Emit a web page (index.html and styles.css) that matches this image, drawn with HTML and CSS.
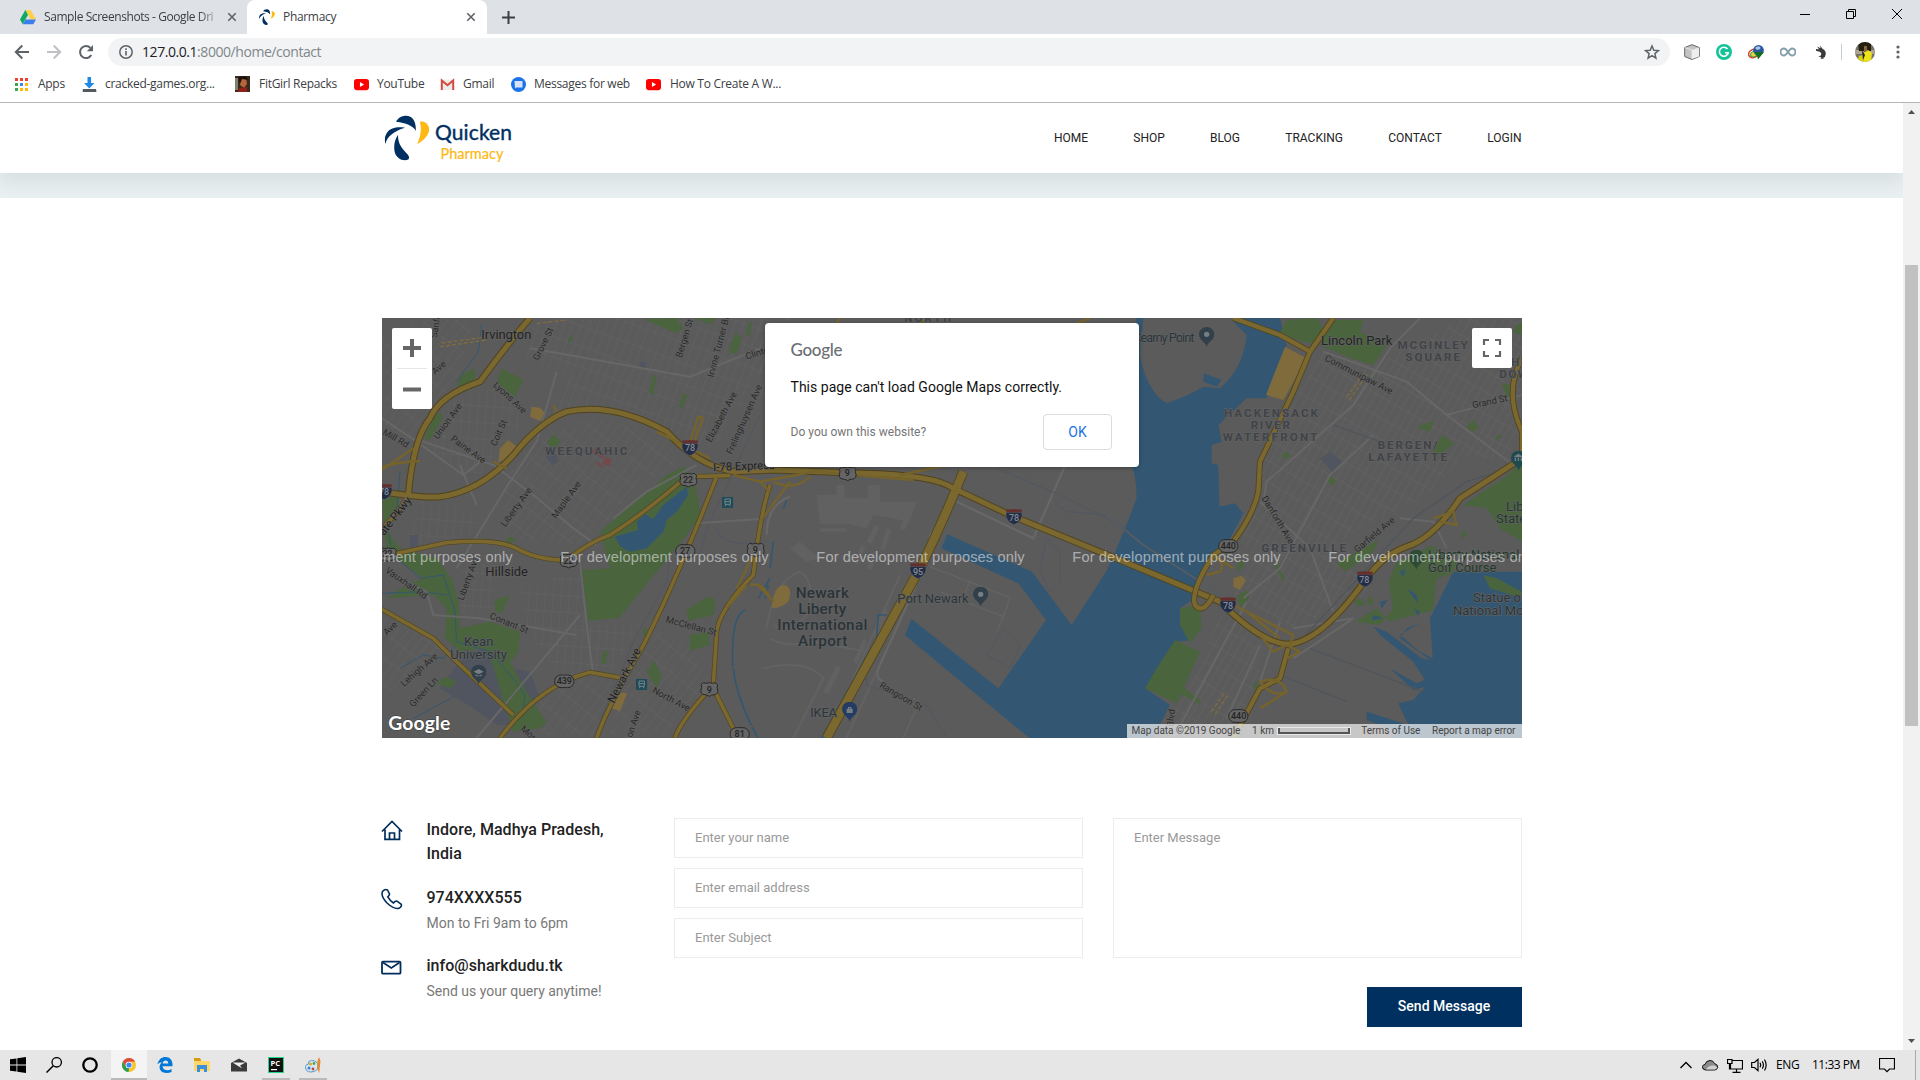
FILE: index.html
```html
<!DOCTYPE html>
<html lang="en">
<head>
<meta charset="utf-8">
<title>Pharmacy</title>
<link rel="stylesheet" href="styles.css">
</head>
<body>
<svg class="defs" width="0" height="0">
  <defs>
    <symbol id="petals" viewBox="0 0 136 138">
      <path fill="#002f62" d="M35 20C43 4 63-2 78 5C91 12 95 28 95 47C84 31 66 24 35 20Z"/>
      <path fill="#002f62" d="M62 38C40 34 18 38 8 52C0 64-1 78 3 86C7 66 28 48 62 38Z"/>
      <path fill="#002f62" d="M41 59C30 75 27 94 31 112C36 130 55 141 72 134C78 126 71 119 63 111C48 96 40 80 41 59Z"/>
      <path fill="#fdb813" d="M107 20C119 17 132 25 135 40C136 58 119 77 99 87C109 64 113 44 107 20Z"/>
    </symbol>
    <symbol id="x" viewBox="0 0 10 10"><path d="M1.3 1.3l7.4 7.4M8.7 1.3L1.3 8.7" stroke="#5f6368" stroke-width="1.6"/></symbol>
    <symbol id="yt" viewBox="0 0 16 16"><rect y="2" width="16" height="12" rx="3" fill="#f00"/><path d="M6.3 5.3v5.4L10.8 8z" fill="#fff"/></symbol>
    <symbol id="interstate" viewBox="0 0 52 50"><path d="M3 12H49C54 28 42 44 26 49C10 44-2 28 3 12Z" fill="#232d44" stroke="#6a6f7a" stroke-width="1.5"/><path d="M3 2Q9 5 14 2Q20 5 26 1Q32 5 38 2Q43 5 49 2V12H3Z" fill="#652f2d"/></symbol>
    <symbol id="usroute" viewBox="0 0 56 46"><path d="M10 3Q19 7 28 3Q37 7 46 3L53 10Q49 17 53 25Q55 36 44 39Q34 39 28 44Q22 39 12 39Q1 36 3 25Q7 17 3 10Z" fill="#656565" stroke="#292929" stroke-width="3"/></symbol>
    <symbol id="stateroute" viewBox="0 0 62 42"><rect x="2" y="2" width="58" height="38" rx="19" fill="#656565" stroke="#292929" stroke-width="3"/></symbol>
    <symbol id="pin" viewBox="0 0 46 60"><path d="M23 60C21 46 0 40 0 22A23 22 0 0 1 46 22C46 40 25 46 23 60Z"/></symbol>
    <symbol id="train" viewBox="0 0 34 34"><rect width="34" height="34" rx="4" fill="#1f4a58"/><path d="M9 7H25V23H9ZM9 29l4-5M25 29l-4-5" fill="none" stroke="#75868b" stroke-width="3"/><path d="M9 15H25" stroke="#75868b" stroke-width="3"/></symbol>
    <pattern id="blocksA" width="58" height="24" patternUnits="userSpaceOnUse" patternTransform="rotate(-70)"><path d="M0 0H58M0 0V24" stroke="#686868" stroke-width="2" fill="none"/></pattern>
    <pattern id="blocksB" width="62" height="24" patternUnits="userSpaceOnUse" patternTransform="rotate(-52)"><path d="M0 0H62M0 0V24" stroke="#686868" stroke-width="2" fill="none"/></pattern>
    <pattern id="blocksC" width="24" height="50" patternUnits="userSpaceOnUse" patternTransform="rotate(4)"><path d="M0 0H24M0 0V50" stroke="#676767" stroke-width="2" fill="none"/></pattern>
    <pattern id="blocksD" width="56" height="22" patternUnits="userSpaceOnUse" patternTransform="rotate(-60)"><path d="M0 0H56M0 0V22" stroke="#696969" stroke-width="2" fill="none"/></pattern>
  </defs>
</svg>

<div class="tabstrip">
  <div class="tab tab-idle">
    <svg width="16" height="15" viewBox="0 0 16 15"><path d="M5.3 0h5.4L16 9.4h-5.4z" fill="#ffcf48"/><path d="M5.3 0L8 4.8 2.7 14.3 0 9.4z" fill="#11a861"/><path d="M5.5 9.4H16l-2.700 4.900H2.700z" fill="#3b7ded"/></svg>
    <span class="tab-title faded">Sample Screenshots - Google Dri</span>
    <svg width="10" height="10"><use href="#x"/></svg>
  </div>
  <div class="tab tab-active">
    <svg width="16" height="18"><use href="#petals"/></svg>
    <span class="tab-title">Pharmacy</span>
    <svg width="10" height="10"><use href="#x"/></svg>
  </div>
  <svg class="newtab" width="13" height="13" viewBox="0 0 13 13"><path d="M6.500 0v13M0 6.500h13" stroke="#3c4043" stroke-width="2"/></svg>
  <div class="winctl">
    <svg width="10" height="10" viewBox="0 0 10 10"><path d="M0 5.500h10" stroke="#000"/></svg>
    <svg width="10" height="10" viewBox="0 0 10 10"><path d="M.5 2.500h7v7h-7zM2.500 2.500v-2h7v7h-2" fill="none" stroke="#000"/></svg>
    <svg width="10" height="10" viewBox="0 0 10 10"><path d="M0 0l10 10M10 0L0 10" stroke="#000"/></svg>
  </div>
</div>

<div class="toolbar">
  <svg width="16" height="16" viewBox="0 0 16 16"><path d="M15 8H2M8.300 1.500L1.800 8l6.500 6.500" fill="none" stroke="#5f6368" stroke-width="2"/></svg>
  <svg width="16" height="16" viewBox="0 0 16 16"><path d="M1 8h13M7.700 1.500L14.200 8l-6.500 6.500" fill="none" stroke="#bfc1c4" stroke-width="2"/></svg>
  <svg width="16" height="16" viewBox="0 0 16 16"><path d="M13.300 11A6 6 0 1 1 12.400 3.900" fill="none" stroke="#5f6368" stroke-width="2"/><path d="M15 1v6.200H8.800z" fill="#5f6368"/></svg>
  <div class="omnibox">
    <svg width="14" height="14" viewBox="0 0 14 14"><circle cx="7" cy="7" r="6.200" fill="none" stroke="#5f6368" stroke-width="1.500"/><path d="M7 6v4.500M7 3.300v1.600" stroke="#5f6368" stroke-width="1.600"/></svg>
    <span class="url"><b>127.0.0.1</b>:8000/home/contact</span>
    <svg width="16" height="16" viewBox="0 0 16 16"><path d="M8 2l1.800 4.200 4.600.4-3.500 3 1 4.500L8 11.700l-3.900 2.400 1-4.500-3.500-3 4.600-.4z" fill="none" stroke="#5f6368" stroke-width="1.500"/></svg>
  </div>
  <div class="exts">
    <svg width="16" height="16" viewBox="0 0 16 16"><path d="M8 .7L15.300 3.500V12.500L8 15.500.7 12.500V3.500z" fill="#c4c4c4" stroke="#666"/><path d="M8 6l7-2.500v9L8 15z" fill="#eee"/><path d="M1 3.600L8 6v9" fill="none" stroke="#eee" stroke-width=".8"/></svg>
    <svg width="16" height="16" viewBox="0 0 16 16"><circle cx="8" cy="8" r="8" fill="#15c39a"/><path d="M11.500 5A4.500 4.500 0 1 0 12.300 8.700H9" fill="none" stroke="#fff" stroke-width="1.600"/></svg>
    <svg width="16" height="16" viewBox="0 0 16 16"><ellipse cx="5.500" cy="9.500" rx="5" ry="4" fill="none" stroke="#d93a2b" stroke-width="1.500" transform="rotate(-25 5.500 9.500)"/><ellipse cx="6" cy="10" rx="3.500" ry="2.600" fill="#e5d43a" stroke="#2fa33f" transform="rotate(-25 6 10)"/><circle cx="10.500" cy="6.200" r="5.300" fill="#2a57a0"/><path d="M7 4q3-3 5-1t-3 3z" fill="#a9c8ea"/><path d="M6.500 8h9.500L10 15.600l-1-4z" fill="#126e20"/></svg>
    <svg width="16" height="16" viewBox="0 0 16 16"><path d="M8 8C6.500 5.500 5.500 4.500 4 4.500a3.500 3.500 0 0 0 0 7C7 11.500 9 4.500 12 4.500a3.500 3.500 0 0 1 0 7C10.500 11.500 9.500 10.500 8 8z" fill="none" stroke="#84a0ab" stroke-width="1.900"/></svg>
    <svg width="16" height="16" viewBox="0 0 16 16"><path d="M4 5l3 .2L5 2.500l3.500 1.800L8 1.500l2.500 3.300q3.500 2 3.300 5.200T11 14l1.200.8H8.500l.8-1.800H6.500l2.500-1.800q1-1.700-.8-3.200L4 6.800z" fill="#3b3b3b"/></svg>
  </div>
  <svg class="avatar" width="20" height="20" viewBox="0 0 20 20"><clipPath id="av"><circle cx="10" cy="10" r="10"/></clipPath><g clip-path="url(#av)"><path fill="#74736a" d="M0 0h20v20H0z"/><path fill="#b0a58c" d="M0 8h20v4H0z"/><path fill="#23200f" d="M3 0h13v9H4z"/><path fill="#8a643b" d="M9 4h3v6H9z"/><path fill="#ece318" d="M8 20l1-9 4-3 4 3-1 9z"/><path fill="#d6cf16" d="M2 20l2-6 4-1 1 7z"/><path fill="#23200f" d="M7 8l3 5-2 5z"/></g></svg>
  <svg width="4" height="14" viewBox="0 0 4 14"><g fill="#5f6368"><circle cx="2" cy="2" r="1.600"/><circle cx="2" cy="7" r="1.600"/><circle cx="2" cy="12" r="1.600"/></g></svg>
</div>

<div class="bookmarks">
  <div class="bm"><svg width="15" height="15" viewBox="0 0 15 15"><path fill="#ea4335" d="M0 1h3v3H0zM5 1h3v3H5zM10 1h3v3h-3z"/><path fill="#34a853" d="M0 6h3v3H0zM0 11h3v3H0z"/><path fill="#4285f4" d="M5 6h3v3H5z"/><path fill="#fbbc05" d="M10 6h3v3h-3zM5 11h3v3H5zM10 11h3v3h-3z"/></svg><span>Apps</span></div>
  <div class="bm"><svg width="15" height="15" viewBox="0 0 15 15"><path fill="#1e88e5" d="M5.500 0h3.500v6h3.500L7.300 11.500 2 6h3.500z"/><path fill="#505a60" d="M1 12h13l.5 3H.5z"/></svg><span>cracked-games.org...</span></div>
  <div class="bm wide"><svg width="15" height="16" viewBox="0 0 15 16"><path fill="#3a2a1e" d="M0 0h15v16H0z"/><path fill="#b5653a" d="M5 2h6l1 6-3 4-4-3z"/><path fill="#8d2118" d="M4 12l8-1v5H3z"/><path fill="#7c8470" d="M0 2h3v12H0z"/><path fill="#1e110b" d="M3 1l8-1 2 4-6-1-2 5z"/></svg><span>FitGirl Repacks</span></div>
  <div class="bm"><svg width="15" height="15"><use href="#yt"/></svg><span>YouTube</span></div>
  <div class="bm"><svg width="15" height="15" viewBox="0 0 15 15"><path fill="#ececec" d="M1 2.500h13v10.500H1z"/><path d="M1.800 13V3.500L7.500 8.300l5.700-4.800V13" fill="none" stroke="#d54b3d" stroke-width="2"/></svg><span>Gmail</span></div>
  <div class="bm"><svg width="15" height="15" viewBox="0 0 15 15"><circle cx="7.500" cy="7.500" r="7.500" fill="#1a73e8"/><path fill="#d5e4fb" d="M3.500 4h8v6.500H5l-1 1z"/></svg><span>Messages for web</span></div>
  <div class="bm wide"><svg width="15" height="15"><use href="#yt"/></svg><span>How To Create A W...</span></div>
</div>

<div class="viewport">
  <div class="page">
    <header class="site-header">
      <svg class="logo" width="134" height="54" viewBox="0 0 134 54">
        <svg x="2.500" y="4" width="45" height="46"><use href="#petals"/></svg>
        <text x="53" y="28.500" class="logo-a" textLength="77">Quicken</text>
        <text x="58.500" y="47.500" class="logo-b" textLength="63">Pharmacy</text>
      </svg>
      <nav><a>HOME</a><a>SHOP</a><a>BLOG</a><a>TRACKING</a><a>CONTACT</a><a>LOGIN</a></nav>
    </header>
    <div class="band"></div>
    <main>
      <div class="map">
        <svg class="map-art" width="1140" height="420" viewBox="6 9 3420 1260">
          <path fill="#5b5b5b" d="M0 0h3440v1280H0z"/>
          <!-- street grids -->
          <path fill="url(#blocksA)" d="M470 0H1150V160L1000 400L880 350L640 280L520 300L560 180L420 130Z"/>
          <path fill="url(#blocksB)" d="M440 400L640 300L860 370L900 450L780 520L700 610L600 690L370 670L380 480ZM6 60L150 10L280 20L230 200L100 370L6 330ZM6 900L190 1000L30 1130L6 1130Z"/>
          <path fill="url(#blocksC)" d="M120 560L300 590L280 660L80 690ZM420 800L600 780L620 930L780 930L700 1060L540 1080L430 940ZM220 260L400 200L420 340L300 480L150 420ZM240 760L350 740L340 880L240 900Z"/>
          <path fill="url(#blocksB)" d="M840 950L970 1000L960 1130L860 1260L680 1260L760 1060ZM420 1160L640 1080L700 1100L650 1260L480 1260Z"/>
          <path fill="url(#blocksA)" d="M1140 9H1230V50L1140 300Z"/>
          <!-- airport aprons -->
          <g fill="#616161"><path d="M1310 540h60v-30h24v40h70v-40h36v50h110l-20 60-110-20-20 40-60-14h-80zM1320 640h80v10h-80zM1460 680l24-50 14 6-24 50zM1420 740l24-50 14 8-24 50zM1500 700l20-60 14 6-20 60zM1460 760l20-50 14 6-20 50zM1560 640l20-50 14 6-20 50zM1360 850l20-40 16 8-20 40zM1420 1040l30-70 12 8-30 70zM1480 960l30-80 14 8-30 80zM1330 1130l40-80 14 8-40 80zM1260 680l60 50-40 10-50-40z"/></g>
          <path fill="none" stroke="#626262" stroke-width="6" d="M1170 970Q1220 1000 1300 980L1460 1010M1150 1060Q1280 1030 1330 1090L1240 1269M1400 1269L1640 740M1370 1200L1560 780M1160 940Q1180 800 1260 770Q1310 800 1280 900Q1230 960 1180 930"/>
          <path fill="none" stroke="#676767" stroke-width="7" d="M1160 660Q1160 570 1230 545M1720 560L1650 660L1640 740L1500 1050Q1480 1090 1510 1100M1730 560L1960 670L2060 440"/>
          <path fill="none" stroke="#646464" stroke-width="4" d="M1600 1150Q1620 1170 1600 1200L1570 1269M1650 755L1890 848L1870 905L1680 830M1770 795L1750 850M1870 905L1850 950"/>
          <path fill="none" stroke="#515661" stroke-width="3" d="M1850 460L2040 540L2240 640M2030 570L2060 590L2180 600M1460 1090V1110L1640 1170L1700 1269M2000 670L2040 710V800L2010 830L1980 770ZM1870 940L1920 990L1890 1060L1820 1020ZM900 500L860 800L760 980L640 1269M960 720L980 640L1060 470L1140 300M1010 640Q1030 700 1130 680"/>
          <!-- east land grids -->
          <path fill="url(#blocksD)" d="M2830 110L3000 140L3250 9H3426V320L3380 440L3260 420L3130 550L2970 620L2850 700L2980 830L2740 940L2560 850L2600 750L2590 660L2640 560L2640 430L2740 250ZM2520 900L2640 960L2640 1100L2550 1269H2330L2440 1090Z"/>
          <!-- water -->
          <g fill="#335772">
            <path d="M2269 9H2290L2280 120Q2300 230 2360 265Q2430 240 2470 215L2520 220Q2590 160 2600 60L2560 20L2570 9H2700L2720 90L2660 250L2600 250L2515 330L2525 380L2495 390L2495 445L2515 450L2518 575L2565 565L2590 595L2540 690L2450 790L2445 850L2400 880L2405 930L2440 975L2390 980L2340 1070L2296 1120L2370 1170L2320 1269H1948L1574 960L1595 912L1855 1120L1998 915L1915 805L1684 700L1702 658L1956 770L2075 930L2181 765L2210 700L2235 640L2270 550Q2270 480 2250 440V120Z"/>
            <path d="M3426 770L3220 770L3180 850L3150 910L3158 1030L3120 1010L3060 960L3100 935L3120 925L3080 940L3060 970L3150 1035L3125 1030L3020 950L2980 935L3000 960L3100 1040L3135 1095L3110 1105L3030 1060L3100 1125L3136 1115L3100 1155L3055 1165L3085 1230L2960 1190L2960 1215L3040 1245V1269H3426Z"/>
            <path d="M2472 175L2525 195L2510 215L2470 200Z"/>
          </g>
          <path fill="none" stroke="#335772" stroke-width="5" d="M1095 885Q1060 900 1058 1000Q1050 1120 1134 1269M1490 900H1520M1495 900L1490 970L1325 1269M1180 680L1170 760M1165 810L1155 850M1220 555L1210 580M1170 790L1135 850" stroke-dasharray="180 6"/>
          <path fill="none" stroke="#335772" stroke-width="3" d="M305 30L295 110L230 200M60 1060L130 1020L190 1030L240 975M100 1210L230 1140L290 1150"/>
          <!-- campus -->
          <path fill="#50555f" d="M180 1120L260 1010L350 1000L340 1050L450 1070L480 1150L420 1230H350L280 1180L230 1150ZM90 660h24v40H90zM495 420l30-10 10 30-20 10zM2820 430l30-20 40 30-30 35zM780 140h18v20h-18z"/>
          <!-- parks -->
          <g fill="#4a643e">
            <path d="M660 650L720 600L860 480L912 455L945 500L962 600L920 660L805 800L718 908L625 917L605 765L690 760Z"/>
            <path d="M6 550L60 545L50 600L25 650L60 700L170 730L215 790L235 860L240 940L330 920L420 950L415 1010L390 1040L440 1130L500 1225L480 1240L400 1250L370 1160L340 1050L310 1000L240 1010L195 970L200 880L160 840L20 850L80 810L130 790L60 740L20 720Z"/>
            <path d="M230 210L245 180L278 160L288 175L275 220L240 222ZM365 160L430 195L405 245L350 205ZM160 310L180 290L188 310L150 375L132 370ZM790 12L890 9L910 40L890 55ZM945 9H1010L990 28ZM500 380L520 360L540 375L530 400L505 390ZM820 180h10l-10 60-14-8zM910 235l12 4-14 40-12-4zM1065 55l20 12-15 50-24-6zM1108 20l8 4-8 40-10-2zM565 70l14-12-6 20-10 6zM920 885L985 843L1007 855L1000 900L925 917ZM930 960L985 950L988 990L930 1008ZM800 1070L822 1038L845 1080L830 1120ZM345 855L390 840L365 895L345 890ZM378 680l12-18 18 14-20 10zM790 940l12-3-6 30-8-4zM668 1010l14-4-4 38-14 4zM165 1105l30-20 35 15-20 20z"/>
          </g>
          <path fill="#335772" d="M705 665L775 645L770 620L795 598L820 612L850 570L920 515L925 540L890 590L860 615L850 650L800 700L750 710L722 695Z"/>
          <path fill="none" stroke="#335772" stroke-width="3" d="M60 470L50 590L20 640L40 720L120 790L190 780L225 890L230 980L330 1010L400 1090L435 1140L430 1180M6 835L130 830L200 840"/>
          <g fill="#4a643e" transform="translate(2280)">
            <path d="M415 60L440 15L530 9L560 60L530 90ZM570 15H670L660 50L740 90L700 150L630 130L540 90ZM105 975L180 1010L110 1165L15 1120L50 1060ZM120 880L180 870L185 940L150 985L120 930ZM110 1100L185 1160L180 1168L100 1125ZM295 840L320 825L328 850L305 875L290 860ZM590 745L715 675L700 710L615 770ZM645 920L710 880L750 920L880 885L890 790L940 775L950 740L870 690L830 720L770 740L745 800L760 880L720 930ZM970 570L1090 490L1146 440V680L1080 640L1040 580ZM1030 780L1070 790L1146 830V850L1050 820ZM875 410L908 360L943 385L900 420ZM830 335L880 318L870 350ZM980 335L998 315L1017 335L998 352ZM1085 205L1110 210L1105 258ZM425 420l14-12 12 14-14 12zM560 496l14-12 14 14-12 14zM1065 367l14-8 6 6-14 10zM960 660l14-16 8 10-14 16zM400 750l10-2 26 44-8 4zM640 860l14-10 24 14-20 12zM680 856l14-12 8 20-10 10zM1130 30L1146 20V60L1120 50ZM340 1110l16-16-10 40zM290 750l14-14 10 14-20 20z"/>
          </g>
          <path fill="#335772" d="M3080 820l30 20 6 28zM3100 880l20 10-6 12zM3000 860l24-6-20 26zM2980 900l30 10-34 6zM3060 770l16-8-6 26z"/>
          <!-- commercial areas -->
          <path fill="#806b3d" d="M2715 95L2780 130L2710 255L2658 240ZM455 275L480 278L495 295L480 318L450 305ZM360 400L385 375L412 395L380 435L355 440ZM1175 880Q1180 810 1215 810Q1240 820 1225 860Q1200 880 1175 880ZM705 1130L742 1135L720 1188L695 1180ZM2560 790l24-8 14 14-18 28-20-8z"/>
          <path fill="none" stroke="#806b3d" stroke-width="4" stroke-dasharray="12 6" d="M180 95L320 75M185 84L320 66M470 25L560 15M2900 245L2955 170M2908 256L2962 178M2495 1190L2535 1130M2505 1198L2545 1138"/>
          <path fill="#74494a" d="M638 405l8-5 30 20-6 10-34-18zM678 425l18 10-10 20-20-12zM652 440l18 14-4 6-18-14z"/>
          <!-- larger local roads -->
          <g fill="none" stroke="#676767" stroke-width="6">
            <path d="M450 100L620 130L930 185L1140 100M100 370L340 450L460 540L580 640L650 690M6 310L110 380L250 480L300 440M290 570L240 450M600 740L620 930L640 1080M60 790L140 830L160 900L300 910L590 960M950 625L1140 612M290 1269L600 900M700 610L800 530L950 450M230 760L390 500L470 380L530 170"/>
            <path d="M2650 560L2660 500L2920 270L3030 100L3120 9M2830 110L3080 200L3200 300L3426 240M2590 850L2700 760L2850 480L2980 360M3200 300L3400 450M2640 560L2790 700L2860 890M2740 940L2920 910L2740 1030M3060 610L3160 620L3200 700M2600 860L2380 1269M2640 990L2540 1210M2700 920L2640 1100"/>
          </g>
          <path fill="none" stroke="#50555c" stroke-width="4" d="M2740 1000L3100 610L3260 500L3420 450M2790 1000L3130 1130M2700 1080L2900 1160M2860 330L3000 380"/>
          <path fill="none" stroke="#575c62" stroke-width="5" d="M2180 600L2290 690L2460 800L2540 860"/>
          <!-- highways -->
          <g fill="none" stroke-linejoin="round">
            <g stroke="#51431f" stroke-width="21">
              <path d="M450 9Q380 90 300 200Q180 240 150 310Q100 370 85 540M6 530Q130 550 180 545Q300 530 400 420Q480 320 560 290Q700 260 860 350Q950 450 1060 470L1180 465L1450 475Q1660 480 1720 520L1890 600L2280 760L2520 860Q2640 980 2720 988Q2820 985 2960 790Q3010 720 3080 695Q3160 670 3240 550L3426 430"/>
            </g>
            <g stroke="#51431f" stroke-width="15">
              <path d="M85 540Q60 590 6 640M6 725L200 683Q350 670 410 700Q470 735 560 735Q630 680 690 660Q800 590 920 485L1050 482M1010 485Q880 820 780 1010Q680 1180 650 1269M6 883L160 970L230 1040L400 1200M360 1269Q480 1110 630 1072L720 1088M1170 510Q1140 600 1120 780Q1020 880 1010 950L1000 1110Q900 1220 885 1269M1000 1120L1060 1240"/>
            </g>
            <g stroke="#51431f" stroke-width="30"><path d="M1750 470Q1680 640 1620 760L1340 1269"/></g>
            <g stroke="#7a682e" stroke-width="25"><path d="M1750 470Q1680 640 1620 760L1340 1269"/></g>
            <g stroke="#7a682e" stroke-width="15">
              <path d="M450 9Q380 90 300 200Q180 240 150 310Q100 370 85 540M6 530Q130 550 180 545Q300 530 400 420Q480 320 560 290Q700 260 860 350Q950 450 1060 470L1180 465L1450 475Q1660 480 1720 520L1890 600L2280 760L2520 860Q2640 980 2720 988Q2820 985 2960 790Q3010 720 3080 695Q3160 670 3240 550L3426 430"/>
            </g>
            <g stroke="#7a682e" stroke-width="11">
              <path d="M85 540Q60 590 6 640M6 725L200 683Q350 670 410 700Q470 735 560 735Q630 680 690 660Q800 590 920 485L1050 482M1010 485Q880 820 780 1010Q680 1180 650 1269M6 883L160 970L230 1040L400 1200M360 1269Q480 1110 630 1072L720 1088M1170 510Q1140 600 1120 780Q1020 880 1010 950L1000 1110Q900 1220 885 1269M1000 1120L1060 1240"/>
            </g>
            <path stroke="#51431f" stroke-width="18" d="M2560 9L2700 60L2790 110L2860 9M2790 110L2740 230L2640 440L2635 530Q2620 600 2560 680L2500 720Q2430 830 2445 870Q2470 900 2500 840M2725 1000L2700 1090L2640 1120L2560 1269M3426 130Q3370 230 3426 350V430"/>
            <path stroke="#7a682e" stroke-width="13" d="M2560 9L2700 60L2790 110L2860 9M2790 110L2740 230L2640 440L2635 530Q2620 600 2560 680L2500 720Q2430 830 2445 870Q2470 900 2500 840M2725 1000L2700 1090L2640 1120L2560 1269M3426 130Q3370 230 3426 350V430"/>
            <path stroke="#75632b" stroke-width="7" d="M6 465L100 400M6 455Q60 440 120 438M340 440L380 460M520 270L530 290M930 380L955 305L970 310L940 385M830 350L990 430M1060 480L1140 500L1170 530M1140 500L1250 480L1300 470L1600 495M1140 620L1230 500M1180 500Q1240 530 1290 485M1560 480L1700 450M1640 9L1560 60M1380 9L1370 25M2080 30L2130 9M1070 820L1110 740L1140 700M1110 810Q1150 800 1170 850M1040 880L1100 810M1134 810L1180 860M2490 720Q2540 740 2520 770L2480 780M2500 720L2560 760M2560 870L2740 960L2730 990M2600 890L2700 970M2640 960L2680 1010L2720 990L2760 1010L2720 1030M2640 1100Q2700 1080 2720 1130Q2680 1150 2640 1100M2720 1130L2640 1180M3160 610L3220 590L3230 630L3180 620"/>
          </g>
          <!-- route shields -->
          <g class="shield">
            <g fill="#858b97"><use href="#interstate" x="904" y="373" width="52" height="50"/><use href="#interstate" x="-14" y="505" width="52" height="50"/><use href="#interstate" x="1876" y="580" width="52" height="50"/><use href="#interstate" x="1588" y="742" width="52" height="50"/><use href="#interstate" x="2518" y="845" width="52" height="50"/><use href="#interstate" x="2929" y="767" width="52" height="50"/>
            <text x="930" y="409">78</text><text x="12" y="541">78</text><text x="1902" y="618">78</text><text x="1614" y="780">95</text><text x="2544" y="882">78</text><text x="2953" y="804">78</text></g>
            <g fill="#242424"><use href="#usroute" x="897" y="472" width="56" height="46"/><use href="#usroute" x="538" y="715" width="56" height="46"/><use href="#usroute" x="-4" y="696" width="56" height="46"/><use href="#usroute" x="1099" y="682" width="56" height="46"/><use href="#usroute" x="960" y="1100" width="56" height="46"/><use href="#usroute" x="1375" y="453" width="56" height="46"/><use href="#stateroute" x="885" y="687" width="62" height="42"/><use href="#stateroute" x="522" y="1078" width="62" height="42"/><use href="#stateroute" x="1048" y="1236" width="62" height="42"/><use href="#stateroute" x="2514" y="672" width="62" height="42"/><use href="#stateroute" x="2544" y="1182" width="62" height="42"/>
            <text x="924" y="504">22</text><text x="565" y="747">22</text><text x="22" y="727">22</text><text x="1126" y="714">9</text><text x="988" y="1134">9</text><text x="1402" y="482">9</text><text x="915" y="717">27</text><text x="553" y="1108">439</text><text x="1079" y="1266">81</text><text x="2545" y="702">440</text><text x="2576" y="1212">440</text></g>
          </g>
          <use href="#train" x="1026" y="545" width="34" height="34"/><use href="#train" x="768" y="1091" width="34" height="34"/>
          <g fill="#31404a"><use href="#pin" x="273" y="1049" width="46" height="60"/><use href="#pin" x="1779" y="815" width="46" height="60"/><use href="#pin" x="2457" y="36" width="46" height="60"/></g>
          <use href="#pin" x="1386" y="1160" width="46" height="60" fill="#243c63"/><use href="#pin" x="3393" y="407" width="46" height="60" fill="#1f4a50"/><use href="#pin" x="3086" y="704" width="46" height="60" fill="#2c4a34"/>
          <g fill="#777e82"><circle cx="1802" cy="838" r="8"/><circle cx="2480" cy="58" r="8"/><path d="M281 1070l15-8 15 8-15 8zM287 1078l9 5 9-5v6h-18zM1400 1181h18v13h-18zM1404 1181v-5h10v5h-3v-2h-4v2zM3403 424l12-8 12 8v3h-24zM3404 429h4v9h-4zM3413 429h4v9h-4zM3422 429h4v9h-4z"/></g>
          <!-- labels -->
          <g class="place">
            <text x="379" y="71" textLength="150">Irvington</text><text x="380" y="782" textLength="128">Hillside</text>
            <text x="296" y="992" textLength="88" class="poi">Kean</text><text x="296" y="1031" textLength="170" class="poi">University</text>
            <text x="2352" y="81" textLength="183" class="poi">Kearny Point</text><text x="2930" y="91" textLength="214">Lincoln Park</text>
            <text x="1659" y="863" textLength="214" class="poi">Port Newark</text><text x="1331" y="1207" textLength="80" class="poi">IKEA</text>
            <g class="start park"><text x="3144" y="733">Liberty National</text><text x="3144" y="772" textLength="205">Golf Course</text><text x="3378" y="587">Liberty</text><text x="3348" y="625">State Park</text></g>
            <g class="start poi"><text x="3279" y="862">Statue of Liberty</text><text x="3219" y="901">National Monument</text></g>
          </g>
          <g class="airport"><text x="1327" y="850" textLength="160">Newark</text><text x="1327" y="898" textLength="144">Liberty</text><text x="1327" y="946" textLength="270">International</text><text x="1328" y="993" textLength="148">Airport</text></g>
          <g class="area">
            <text x="621" y="420" textLength="250">WEEQUAHIC</text><text x="1645" y="20" textLength="145">NORTH</text><text x="2675" y="305" textLength="286">HACKENSACK</text><text x="2673" y="341" textLength="122">RIVER</text><text x="2672" y="378" textLength="288">WATERFRONT</text><text x="3085" y="401" textLength="184">BERGEN/</text><text x="3085" y="437" textLength="240">LAFAYETTE</text><text x="3160" y="102" textLength="215">MCGINLEY</text><text x="3160" y="137" textLength="168">SQUARE</text><text x="2773" y="710" textLength="258">GREENVILLE</text>
            <g class="start"><text x="3393" y="152">HISTORIC</text><text x="3358" y="188">DOWNTOWN</text></g>
          </g>
          <g class="street">
            <text transform="translate(475 138) rotate(-64)">Grove St</text><text transform="translate(905 130) rotate(-73)">Bergen St</text><text transform="translate(1000 188) rotate(-75)">Irvine Turner Blvd</text><text transform="translate(1100 134) rotate(-18)">Clinton</text><text transform="translate(338 212) rotate(43)">Lyons Ave</text><text transform="translate(174 374) rotate(-54)">Union Ave</text><text transform="translate(348 395) rotate(-66)">Coit St</text><text transform="translate(210 375) rotate(36)">Paine Ave</text><text transform="translate(6 357) rotate(30)">Mill Rd</text><text transform="translate(376 637) rotate(-54)">Liberty Ave</text><text transform="translate(528 612) rotate(-54)">Maple Ave</text><text transform="translate(993 384) rotate(-62)">Elizabeth Ave</text><text transform="translate(1055 420) rotate(-66)">Frelinghuysen Ave</text><text transform="translate(170 70) rotate(-80)">Sanfo</text><text transform="translate(165 180) rotate(-40)">Ave</text><text transform="translate(14 770) rotate(35)">Vauxhall Rd</text><text transform="translate(250 858) rotate(-70)">Liberty Ave</text><text transform="translate(327 910) rotate(22)">Conant St</text><text transform="translate(856 922) rotate(15)">McClellan St</text><text transform="translate(72 1116) rotate(-41)">Lehigh Ave</text><text transform="translate(100 1178) rotate(-47)">Green Ln</text><text transform="translate(815 1132) rotate(28)">North Ave</text><text transform="translate(420 1244) rotate(42)">Morris</text><text transform="translate(756 1269) rotate(-72)">on Ave</text><text transform="translate(10 972) rotate(-43)">. Ave</text><text transform="translate(1496 1116) rotate(30)">Rangoon St</text><text transform="translate(2832 136) rotate(27)">Communipaw Ave</text><text transform="translate(3279 280) rotate(-12)">Grand St</text><text transform="translate(2644 550) rotate(59)">Danforth Ave</text><text transform="translate(2932 714) rotate(-40)">Garfield Ave</text><text transform="translate(2380 1236) rotate(-85)">Blvd</text>
          </g>
          <g class="road"><text transform="translate(1000 468) rotate(-2)">I-78 Express</text><text transform="translate(702 1166) rotate(-63)">Newark Ave</text><text transform="translate(12 664) rotate(-52)">ate Pkwy</text></g>
          <g class="watermark"><text x="-227" y="741" textLength="625">For development purposes only</text><text x="541" y="741" textLength="625">For development purposes only</text><text x="1309" y="741" textLength="625">For development purposes only</text><text x="2077" y="741" textLength="625">For development purposes only</text><text x="2845" y="741" textLength="625">For development purposes only</text></g>
          <text class="glogo" x="25" y="1246" textLength="186">Google</text>
        </svg>
        <div class="zoomctl">
          <svg width="40" height="40" viewBox="0 0 40 40"><path d="M20 11v18M11 20h18" stroke="#666" stroke-width="4"/></svg>
          <i></i>
          <svg width="40" height="40" viewBox="0 0 40 40"><path d="M11 20.500h18" stroke="#666" stroke-width="4"/></svg>
        </div>
        <svg class="full" width="40" height="40" viewBox="0 0 40 40"><path d="M12 17v-5h5M23 12h5v5M28 23v5h-5M17 28h-5v-5" fill="none" stroke="#666" stroke-width="2.200"/></svg>
        <div class="attrib"><span>Map data ©2019 Google</span><span>1 km</span><i></i><span>Terms of Use</span><span>Report a map error</span></div>
        <div class="dialog">
          <div class="dlg-logo">Google</div>
          <p>This page can't load Google Maps correctly.</p>
          <div class="dlg-foot"><a>Do you own this website?</a><button>OK</button></div>
        </div>
      </div>

      <section class="contact">
        <div class="info">
          <div class="info-row first">
            <svg width="22" height="22" viewBox="0 0 22 22"><path d="M1 11.500L11 1.500 21 11.500M4 9.500V19.300H18.500V9.500M8.500 19V13H13.500V19" fill="none" stroke="#002e5b" stroke-width="1.700"/></svg>
            <div><h3>Indore, Madhya Pradesh,<br>India</h3></div>
          </div>
          <div class="info-row">
            <svg width="22" height="22" viewBox="0 0 22 22"><path d="M1.500 3.500Q4 .5 6.500 2L8.500 6Q8.500 7.500 6.800 8.800Q8.500 12 12.500 15Q14.500 12.500 16 13.200L20 16Q21.500 18 18 20.300Q13 21.500 6 15Q-.5 8 1.500 3.500Z" fill="none" stroke="#002e5b" stroke-width="1.600"/></svg>
            <div><h3>974XXXX555</h3><p>Mon to Fri 9am to 6pm</p></div>
          </div>
          <div class="info-row">
            <svg width="22" height="22" viewBox="0 0 22 22"><rect x="1" y="5.700" width="18.500" height="12" rx="1" fill="none" stroke="#002e5b" stroke-width="1.800"/><path d="M2 6.500l8.300 5.500 8.200-5.500" fill="none" stroke="#002e5b" stroke-width="1.700"/></svg>
            <div><h3>info@sharkdudu.tk</h3><p>Send us your query anytime!</p></div>
          </div>
        </div>
        <form>
          <div class="fields"><input placeholder="Enter your name"><input placeholder="Enter email address"><input placeholder="Enter Subject"></div>
          <textarea placeholder="Enter Message"></textarea>
          <button type="button" class="send">Send Message</button>
        </form>
      </section>
    </main>
  </div>
  <div class="scrollbar">
    <svg width="17" height="17" viewBox="0 0 17 17"><path d="M5 11h7L8.500 7z" fill="#505050"/></svg>
    <div class="thumb"></div>
    <svg class="down" width="17" height="17" viewBox="0 0 17 17"><path d="M5 6h7l-3.500 4z" fill="#505050"/></svg>
  </div>
</div>

<div class="taskbar">
  <div class="tb"><svg width="16" height="16" viewBox="0 0 16 16"><path d="M0 2.300L6.500 1.400V7.500H0zM7.300 1.300L16 0V7.500H7.300zM0 8.500H6.500V14.600L0 13.700zM7.300 8.500H16V16L7.300 14.700z"/></svg></div>
  <div class="tb near"><svg width="16" height="16" viewBox="0 0 16 16"><circle cx="10.700" cy="5.300" r="4.700" fill="none" stroke="#000" stroke-width="1.300"/><path d="M7.300 8.700L.5 15.500" stroke="#000" stroke-width="1.500"/></svg></div>
  <div class="tb near"><svg width="16" height="16" viewBox="0 0 16 16"><circle cx="8" cy="8" r="6.700" fill="none" stroke="#000" stroke-width="2.300"/></svg></div>
  <div class="tb on current"><svg width="16" height="16" viewBox="0 0 16 16"><circle cx="8" cy="8" r="7" fill="#f7c52b"/><path d="M1.900 4.500A7 7 0 0 1 14.100 4.500L8 4.700 5 9.500z" fill="#dd4b3e"/><path d="M1.900 4.500L5.500 10.500 8.200 11 7.500 15A7 7 0 0 1 1.900 4.500z" fill="#2a9e58"/><circle cx="8" cy="8" r="3.300" fill="#fff"/><circle cx="8" cy="8" r="2.600" fill="#4285f4"/></svg></div>
  <div class="tb near"><svg width="16" height="16" viewBox="0 0 16 16"><path d="M.5 7.300C1.300 2.500 4.800 0 8.500 0C13 0 15.500 3.300 15.500 7.500V9.300H5.500C5.600 12 8 13.200 10.300 13.200Q12.600 13.200 14.500 12V15Q12.500 16 9.500 16C5 16 2.500 13.500 2.500 9.800Q2.500 7 5 5.200Q2.200 5.400.5 7.300ZM5.600 6.600H11.300Q11.300 3.600 8.600 3.600Q6.200 3.600 5.600 6.600Z" fill="#0078d7" fill-rule="evenodd"/></svg></div>
  <div class="tb"><svg width="16" height="16" viewBox="0 0 16 16"><path fill="#d99b13" d="M0 1h6l1 2v3H0z"/><path fill="#ffd766" d="M0 4h16v10H0z"/><path fill="#3c8fdc" d="M3 8h10v7h-3v-3H6v3H3z"/></svg></div>
  <div class="tb"><svg width="16" height="16" viewBox="0 0 16 16"><path fill="#3b3b3b" d="M0 6l8-4.500L16 6v8.500H0z"/><path fill="#eee" d="M1.500 5.500h13L9 8.500l2 2.700-3.500-2z"/></svg></div>
  <div class="tb on"><svg width="16" height="16" viewBox="0 0 16 16"><path fill="#111" stroke="#21d789" d="M.5.500h15v15H.5z"/><path fill="#fff" d="M3 12h6v1.200H3z"/><text x="2.500" y="8.800" class="pc">PC</text></svg></div>
  <div class="tb on"><svg width="16" height="16" viewBox="0 0 16 16"><path d="M6.500 3.500Q13 3.500 13 9T6 15Q0 15 .5 9.500Q1 7 3 7.500Q3 3.500 6.500 3.500z" fill="#d5e7f3" stroke="#5d9cc4"/><circle cx="5.500" cy="7" r="1.500" fill="#e6a41b"/><circle cx="9" cy="6.500" r="1.400" fill="#48a84b"/><circle cx="4" cy="11" r="1.500" fill="#3b7fd4"/><circle cx="8" cy="12" r="1.400" fill="#c44"/><path d="M14 0l1.500 4-1.300 12-1.800-4V4z" fill="#e28a34"/></svg></div>
  <div class="tray">
    <svg width="14" height="16" viewBox="0 0 14 16"><path d="M1.500 11L7 5.500l5.500 5.500" fill="none" stroke="#000" stroke-width="1.300"/></svg>
    <svg width="18" height="16" viewBox="0 0 18 16"><path d="M4.500 13Q1 12.500 1.500 9.500Q2 7.500 4 7.500Q5 3.500 9 3.500Q12.500 3.500 13.500 6.500Q17 7.500 16.700 10.500Q16 13 13.500 13Z" fill="#8b8b8b" stroke="#111"/><path d="M5 12.500Q7 8.500 12 8.500Q16 9 16 11l-2 1.500z" fill="#d0d0d0"/></svg>
    <svg width="16" height="16" viewBox="0 0 16 16"><path d="M5 3.500H15.500V12H3.500V7M9.500 12v3M5.500 15.300h8M.5 2.500H5V6.500H.5zM2.500 6.500V12H4" fill="none" stroke="#000" stroke-width="1.200"/></svg>
    <svg width="17" height="16" viewBox="0 0 17 16"><path d="M.7 5.500H3.500L7 2.300V13.700L3.500 10.500H.7ZM9 5.800Q10.300 8 9 10.200M11.300 4.200Q13.500 8 11.300 11.800M13.500 2.500Q16.800 8 13.500 13.500" fill="none" stroke="#000" stroke-width="1.200"/></svg>
    <span class="lang">ENG</span><span class="clock">11:33 PM</span>
    <svg width="16" height="16" viewBox="0 0 16 16"><path d="M.5 1.500h15v10.500h-5L8 14.700 5.500 12h-5z" fill="none" stroke="#000" stroke-width="1.200"/></svg>
    <i></i>
  </div>
</div>
</body>
</html>
```
FILE: styles.css
```css
* { box-sizing: border-box; }
body { margin: 0; width: 1920px; height: 1080px; overflow: hidden; display: flex; flex-direction: column; background: #fff; font-family: Roboto, sans-serif; }
svg { display: block; flex: none; }
.defs { position: absolute; }

/* browser chrome */
.tabstrip { height: 34px; background: #dee1e6; display: flex; align-items: center; flex: none; font: 12px "Open Sans", sans-serif; color: #3c4043; }
.tab { height: 34px; display: flex; align-items: center; gap: 8px; }
.tab-idle { width: 247px; padding: 0 10px 0 20px; }
.tab-active { width: 240px; padding: 0 11px 0 12px; background: #fff; border-radius: 8px 8px 0 0; }
.tab-title { flex: 1; white-space: nowrap; overflow: hidden; letter-spacing: -.32px; padding-bottom: 1px; }
.faded { letter-spacing: -.42px; -webkit-mask-image: linear-gradient(90deg, #000 88%, rgba(0,0,0,.15)); mask-image: linear-gradient(90deg, #000 88%, rgba(0,0,0,.15)); }
.newtab { margin-left: 15px; }
.winctl { margin-left: auto; display: flex; gap: 36px; padding: 0 18px 6px 0; }
.toolbar { height: 36px; display: flex; align-items: center; gap: 16px; padding: 0 20px 0 14px; flex: none; }
.omnibox { width: 1563px; height: 28px; margin-left: -2px; border-radius: 14px; background: #f1f3f4; display: flex; align-items: center; padding: 0 10px 0 11px; gap: 9px; }
.url { flex: 1; padding-bottom: 1px; font: 14px "Open Sans", sans-serif; letter-spacing: -.44px; color: #80868b; }
.url b { font-weight: 400; color: #202124; }
.exts { display: flex; gap: 16px; margin-left: -2px; padding-right: 13px; border-right: 1px solid #c8cacd; }
.exts svg { height: 16px; }
.avatar { margin-left: -3px; margin-right: 5px; }
.bookmarks { height: 33px; flex: none; padding: 0 15px 4px; border-bottom: 1px solid #b5b5b5; display: grid; grid-template-columns: 67px 153px 119px 86px 71px 135px auto; align-items: center; font: 12px "Open Sans", sans-serif; letter-spacing: -.28px; color: #3c4043; }
.bm { display: flex; align-items: center; gap: 8px; white-space: nowrap; }
.bm.wide { gap: 9px; }
.bm span { padding-bottom: 1px; }

/* page */
.viewport { display: flex; height: 947px; }
.page { width: 1903px; background: #fff; overflow: hidden; }
.site-header { position: relative; height: 70px; padding: 0 381.500px; display: flex; justify-content: space-between; align-items: center; background: #fff; box-shadow: 0 10px 15px rgba(0,0,0,.06); }
.logo-a { font: 400 21px Lato, sans-serif; fill: #002f62; stroke: #002f62; stroke-width: .4px; }
.logo-b { font: 400 14.500px Lato, sans-serif; fill: #fdb813; stroke: #fdb813; stroke-width: .2px; }
nav { display: flex; gap: 45.250px; font-size: 12px; color: #222; }
.band { height: 25px; background: #e7eff1; }
main { width: 1140px; margin: 120px auto 0; }
.map { position: relative; height: 420px; overflow: hidden; }
.zoomctl { position: absolute; left: 10px; top: 10px; width: 40px; height: 81px; background: #fff; border-radius: 2px; }
.zoomctl i { display: block; height: 1px; margin: 0 5px; background: #e6e6e6; }
.full { position: absolute; right: 10px; top: 10px; background: #fff; border-radius: 2px; }
.attrib { position: absolute; right: 0; bottom: 0; height: 14px; width: 395px; padding: 0 6px 1px 5px; display: flex; align-items: center; justify-content: space-between; background: rgba(245,245,245,.7); color: #444; font-size: 10px; white-space: nowrap; }
.attrib i { width: 72px; height: 6px; margin-left: -8px; border: 2px solid #555; border-top: 0; outline: 1px solid rgba(255,255,255,.6); }
.dialog { position: absolute; left: 383px; top: 5px; width: 374px; height: 144px; padding: 17px 26.500px 16px 26px; background: #fff; border-radius: 4px; box-shadow: 0 1px 4px rgba(0,0,0,.3); }
.dlg-logo { font: 500 17px/20px Lato, sans-serif; color: #6b6f73; letter-spacing: -.3px; }
.dialog p { margin: 18px 0; font-size: 14px; line-height: 18px; letter-spacing: .03px; color: #111; }
.dlg-foot { display: flex; justify-content: space-between; align-items: center; font-size: 12px; letter-spacing: .03px; color: #757575; }
.dlg-foot button { width: 69px; height: 36px; background: #fff; border: 1px solid #dadce0; border-radius: 4px; font: 14px Roboto, sans-serif; color: #1a73e8; }

/* map lettering */
.map-art text { font-family: Roboto, sans-serif; text-anchor: middle; paint-order: stroke; stroke: #626262; stroke-width: 4px; stroke-linejoin: round; }
.map-art .shield text { font-size: 27px; font-weight: 500; stroke: none; }
.place text { font-size: 39px; fill: #222; }
.place text.poi, .place .poi text { fill: #2b353c; }
.place .park text { fill: #233a2a; }
.map-art .start text, .map-art .street text, .map-art .road text { text-anchor: start; }
.airport text { font-size: 46px; font-weight: 500; fill: #2a3338; }
.area text { font-size: 35px; font-weight: 700; fill: #404348; letter-spacing: 4px; }
.street text { font-size: 28px; fill: #292929; }
.road text { font-size: 34px; fill: #1e1e1e; }
.map-art .watermark text { font: 44px "Liberation Sans", sans-serif; text-anchor: start; stroke: none; fill: rgba(255,255,255,.52); }
.map-art text.glogo { font: 700 58px Lato, sans-serif; text-anchor: start; fill: #fff; stroke: #444; }

/* contact */
.contact { display: flex; justify-content: space-between; margin-top: 80px; }
.info { margin-left: -1px; }
.info-row { display: flex; gap: 24px; margin-bottom: 21px; }
.info-row svg { margin-top: 2px; }
.info-row.first { margin-bottom: 20px; }
.info h3 { margin: 0; font-size: 16px; line-height: 24px; font-weight: 500; letter-spacing: .03px; color: #222; }
.info p { margin: 3px 0 0; font-size: 14px; line-height: 20px; color: #797979; }
form { width: 848px; display: grid; grid-template-columns: 409px 409px; gap: 29px 30px; }
.fields { display: flex; flex-direction: column; gap: 10px; }
input, textarea { display: block; width: 409px; height: 40px; border: 1px solid #ececec; padding: 0 20px 2px 20.500px; font: 13px Roboto, sans-serif; resize: none; background: #fff; outline: 0; }
textarea { height: 140px; padding-top: 11px; }
::placeholder { color: #999; opacity: 1; }
.send { grid-column: 2; justify-self: end; width: 155px; height: 40px; padding: 0 0 2px; border: 0; background: #00305f; color: #fff; font: 500 14px Roboto, sans-serif; }
.scrollbar { width: 17px; background: #f1f1f1; display: flex; flex-direction: column; }
.thumb { width: 13px; height: 461px; margin: 145px auto 0; background: #c1c1c1; }
.down { margin-top: auto; }

/* taskbar */
.taskbar { height: 30px; background: #e6e6e6; display: flex; flex: none; font: 12px "Open Sans", sans-serif; }
.tb { width: 28px; height: 30px; margin-left: 9px; display: flex; align-items: center; justify-content: center; border-bottom: 2px solid transparent; padding-top: 2px; }
.tb:first-child { margin-left: 4px; }
.tb.near { margin-left: 8px; }
.tb.on { border-color: #bababa; }
.tb.current { width: 36px; margin: 0 -4px 0 7px; background: #f4f4f4; }
.tray { margin-left: auto; display: flex; align-items: center; width: 241px; }
.tray svg { margin-right: 8px; }
.lang { width: 36px; letter-spacing: -.4px; padding-bottom: 1px; }
.clock { width: 67px; letter-spacing: -.5px; white-space: nowrap; padding-bottom: 1px; }
.tray i { width: 1px; height: 30px; margin-left: auto; margin-right: 4px; background: #aaa; }
.pc { font: 700 7.500px "Open Sans", sans-serif; fill: #fff; }
```
